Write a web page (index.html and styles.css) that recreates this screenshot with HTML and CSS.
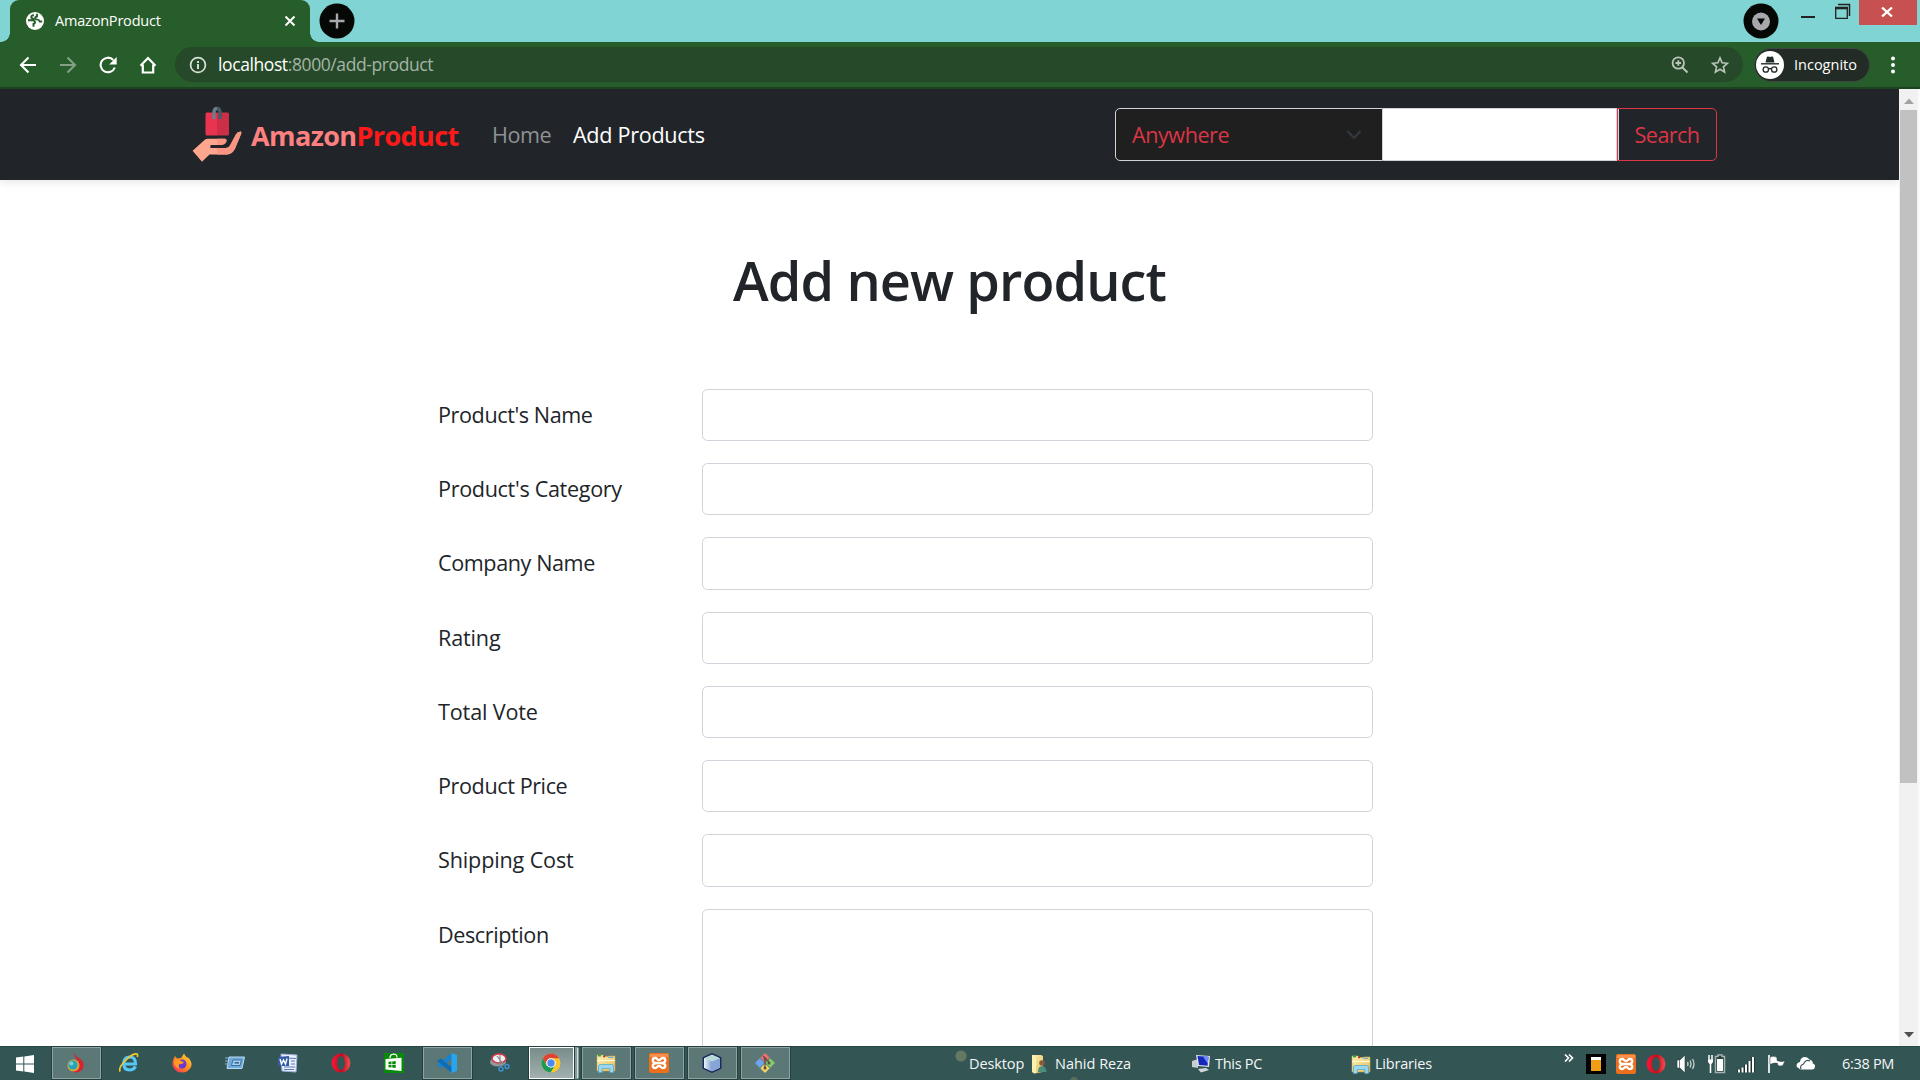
FILE: index.html
```html
<!DOCTYPE html>
<html lang="en">
<head>
<meta charset="utf-8">
<title>AmazonProduct</title>
<link rel="stylesheet" href="styles.css">
</head>
<body>
<svg class="defs" aria-hidden="true">
  <defs>
    <linearGradient id="operaRed" x1="0" x2="1"><stop offset="0" stop-color="#fa1634"/><stop offset=".55" stop-color="#c40a1e"/><stop offset="1" stop-color="#f4504f"/></linearGradient>
    <linearGradient id="folderYellow" x1="0" y1="0" x2="1" y2="1"><stop offset="0" stop-color="#fdf3b4"/><stop offset="1" stop-color="#e3bd5c"/></linearGradient>
    <linearGradient id="foxFire" x1="1" y1="0" x2="0" y2="1"><stop offset="0" stop-color="#ffe23c"/><stop offset=".5" stop-color="#ff8a1c"/><stop offset="1" stop-color="#f5206a"/></linearGradient>
    <linearGradient id="cubeSide" x1="0" x2="1"><stop offset="0" stop-color="#eef5fc"/><stop offset="1" stop-color="#7f9fd0"/></linearGradient>
    <symbol id="opera" viewBox="0 0 20 20"><path fill="url(#operaRed)" fill-rule="evenodd" d="M10 .5c5.2 0 9.3 4.1 9.3 9.5s-4.100 9.500-9.300 9.500S.7 15.400.7 10 4.800.5 10 .5zm0 2.500c-2.300 0-3.900 3-3.900 7s1.600 7 3.900 7 3.900-3 3.900-7-1.600-7-3.900-7z"/></symbol>
    <symbol id="xampp" viewBox="0 0 20 20"><rect width="20" height="20" rx="2" fill="#ec6f1d"/><rect x="1" y="1" width="18" height="3" fill="#f9a063" opacity=".7"/><path d="M8.300 10H11.700M8.300 10C6 10 3.700 9 3.700 7.200S5 5 6.300 5C8.200 5 8 7 10 7s1.800-2 3.700-2c1.300 0 2.600.5 2.600 2.300S14 10 11.700 10c2.300 0 4.600 1 4.600 2.800S15 15 13.700 15c-1.900 0-1.700-2-3.700-2s-1.800 2-3.700 2c-1.300 0-2.600-.5-2.600-2.200S6 10 8.300 10z" fill="none" stroke="#fff" stroke-width="2.300" stroke-linejoin="round"/></symbol>
    <symbol id="library" viewBox="0 0 20 20"><path d="M1 2h6l1 1.500h4L12.500 3H19v15H1z" fill="url(#folderYellow)" stroke="#c9a548" stroke-width=".6"/><path d="M2 2.500h3" stroke="#2aa53a" stroke-width="2"/><path d="M7 3.500h2" stroke="#d23" stroke-width="1.500"/><path d="M12 4.300h5" stroke="#4aa6dd"/><path d="M1 7.500h18" stroke="#fff8d0" stroke-width="1.200"/><path d="M2.500 19.500v-6.300q0-1.700 1.700-1.700h11.600q1.700 0 1.700 1.700v6.300h-3.700v-4H6.200v4z" fill="#9bd6f0" stroke="#4da3cf" stroke-width=".7"/></symbol>
  </defs>
</svg>

<div class="screen">
  <header class="tabstrip">
    <div class="tab">
      <svg class="globe" viewBox="0 0 18 18"><circle cx="9" cy="9" r="9" fill="#fff"/><path d="M8 3.300Q5 3.200 5.300 5.300 5.600 6.800 8.500 7M2 8.300h4.500q2.300.2 2.500 1.900.2 1.500-1.500 1.600v3M11 1.800v2.700q-2 .3-1.800 1.900.3 1.400 2.300 1.200 1.700 0 2.200 1.900h2.500" fill="none" stroke="#275d2a" stroke-width="1.900"/></svg>
      <span class="tab-title">AmazonProduct</span>
      <svg class="tab-close" viewBox="0 0 12 12"><path d="M1.500 1.500l9 9M10.500 1.500l-9 9" stroke="#fff" stroke-width="2"/></svg>
    </div>
    <svg class="new-tab" viewBox="0 0 36 36"><circle cx="18" cy="18" r="17.500" fill="#050805"/><path d="M18 10.500v15M10.500 18h15" stroke="#a8a8ac" stroke-width="2.400"/></svg>
    <div class="window-controls">
      <svg class="tab-search" viewBox="0 0 36 36"><circle cx="18" cy="18" r="17.500" fill="#050805"/><circle cx="18" cy="18.500" r="9" fill="#a8a8ac"/><path d="M14 15.500h8l-4 6.500z" fill="#050805"/></svg>
      <svg class="minimize" viewBox="0 0 14 20"><path d="M0 17h14" stroke="#222" stroke-width="2"/></svg>
      <svg class="restore" viewBox="0 0 16 20"><path d="M3 4.500h11.500V16" fill="none" stroke="#222" stroke-width="1.500"/><path d="M.7 8h11.600v10.300H.7z" fill="none" stroke="#222" stroke-width="1.300"/><path d="M0 8h13" stroke="#222" stroke-width="2.600"/></svg>
      <div class="window-close"><svg viewBox="0 0 12 10"><path d="M1 .5l10 9M11 .5l-10 9" stroke="#fff" stroke-width="2.300"/></svg></div>
    </div>
  </header>

  <div class="toolbar">
    <nav class="nav-buttons">
      <svg viewBox="0 0 18 18"><path d="M17 9H2.500M9.500 1.500L2 9l7.500 7.500" fill="none" stroke="#fff" stroke-width="2.100"/></svg>
      <svg viewBox="0 0 18 18"><path d="M1 9h14.500M8.500 1.500L16 9l-7.500 7.500" fill="none" stroke="#84a185" stroke-width="2.100"/></svg>
      <svg viewBox="0 0 18 18"><path d="M15.800 11.500A7.300 7.300 0 1 1 14.300 4" fill="none" stroke="#fff" stroke-width="2.100"/><path d="M17.700 1v7.500h-7.500z" fill="#fff"/></svg>
      <svg viewBox="0 0 18 18"><path d="M1.500 9.700L9 2l7.500 7.700M3.800 8.500v8h10.400v-8" fill="none" stroke="#fff" stroke-width="2.200"/></svg>
    </nav>
    <div class="omnibox">
      <svg class="info" viewBox="0 0 18 18"><circle cx="9" cy="9" r="7.400" fill="none" stroke="#dbe1db" stroke-width="1.700"/><path d="M9 8v5M9 5v2" stroke="#dbe1db" stroke-width="1.900"/></svg>
      <span class="url"><span class="host">localhost</span>:8000/add-product</span>
      <svg class="zoom" viewBox="0 0 18 18"><circle cx="7.300" cy="7" r="5.700" fill="none" stroke="#bdc6bd" stroke-width="1.800"/><path d="M11.500 11.500l5 5M4.500 7h5.600M7.300 4.200v5.600" stroke="#bdc6bd" stroke-width="1.800"/></svg>
      <svg class="star" viewBox="0 0 18 18"><path d="M9 1.900l2.100 4.900 5.300.5-4 3.500 1.200 5.300L9 13.300l-4.600 2.800 1.200-5.300-4-3.500 5.300-.5z" fill="none" stroke="#bdc6bd" stroke-width="1.600"/></svg>
    </div>
    <div class="incognito">
      <svg viewBox="0 0 28 28"><circle cx="14" cy="14" r="14" fill="#fff"/><path d="M9.500 11.500l1.300-5.300q.3-1 1.300-.7l1.900.5 1.900-.5q1-.3 1.300.7l1.300 5.300z" fill="#222b25"/><path d="M5 12.800h18" stroke="#222b25" stroke-width="1.400"/><g fill="none" stroke="#222b25" stroke-width="1.300"><circle cx="9.800" cy="18.500" r="2.700"/><circle cx="18.200" cy="18.500" r="2.700"/><path d="M12.500 18q1.500-1 3 0"/></g></svg>
      <span>Incognito</span>
    </div>
    <svg class="menu-dots" viewBox="0 0 6 18"><g fill="#fff"><circle cx="3" cy="2.500" r="2"/><circle cx="3" cy="9" r="2"/><circle cx="3" cy="15.500" r="2"/></g></svg>
  </div>

  <div class="viewport">
    <main class="page">
      <nav class="navbar">
        <svg class="logo" viewBox="0 0 50 56"><rect x="13.500" y="6.500" width="12" height="23" rx="1.500" fill="#e8344f"/><path d="M25 6.500h10.500q1.500 0 1.500 1.500v20q0 1.500-1.500 1.500H25z" fill="#cb2f47"/><path d="M22 13V6.500q0-4 3-4" fill="none" stroke="#687f8b" stroke-width="3.400"/><path d="M25 2.500q3 0 3 4V13" fill="none" stroke="#455b66" stroke-width="3.400"/><path d="M.6 44.800L12.500 34q1.500-1.300 3.500-1.300h17.200q1.500.3 1.300 2.300-.3 2.200-2 3l-3 1H19q-1.500 1-.5 3h15q3 0 4.500-2.500l6-11.300q1.500-2.800 5-2.700l.4 1.800-6.200 15q-2.600 5.800-8.200 6.200H17.500L10 55.800z" fill="#ffa68f"/><path d="M25 32.700h8.200q1.500.3 1.300 2.300-.3 2.200-2 3l-3 1H25zM25 42h8.500q3 0 4.500-2.500l6-11.300q1.500-2.800 5-2.700l.4 1.800-6.200 15q-2.600 5.800-8.200 6.200H25z" fill="#f99582"/></svg>
        <a class="brand"><span class="brand-first">Amazon</span><span class="brand-second">Product</span></a>
        <a class="nav-link nav-home">Home</a>
        <a class="nav-link nav-add">Add Products</a>
        <div class="search-group">
          <div class="select"><span>Anywhere</span><svg viewBox="0 0 16 12"><path d="M1.500 2L8 9l6.500-7" fill="none" stroke="#343a40" stroke-width="2"/></svg></div>
          <input class="search-input" type="text" aria-label="Search">
          <button class="search-button">Search</button>
        </div>
      </nav>
      <h1 class="title">Add new product</h1>
      <form class="product-form">
        <label class="tight" for="f1">Product's Name</label><input id="f1" class="field">
        <label class="snug" for="f2">Product's Category</label><input id="f2" class="field">
        <label class="tight" for="f3">Company Name</label><input id="f3" class="field">
        <label for="f4">Rating</label><input id="f4" class="field">
        <label for="f5">Total Vote</label><input id="f5" class="field">
        <label class="tight" for="f6">Product Price</label><input id="f6" class="field">
        <label for="f7">Shipping Cost</label><input id="f7" class="field">
        <label class="tight" for="f8">Description</label><textarea id="f8" class="field field-tall"></textarea>
      </form>
    </main>
    <div class="scrollbar">
      <svg viewBox="0 0 10 6"><path d="M0 6l5-5.500L10 6z" fill="#a3a3a3"/></svg>
      <div class="thumb"></div>
      <svg class="arrow-down" viewBox="0 0 10 6"><path d="M0 0l5 5.500L10 0z" fill="#505050"/></svg>
    </div>
  </div>

  <footer class="taskbar">
    <div class="start"><svg viewBox="0 0 18 18"><path d="M0 2.600L7.300 1.500v7H0zM8.300 1.400L18 0v8.500H8.300zM0 9.500h7.300v7L0 15.500zM8.300 9.500H18V18l-9.700-1.400z" fill="#fff"/></svg></div>
    <div class="apps">
      <div class="app open"><svg viewBox="0 0 20 20"><path d="M8 0q1 3 5 5 5 3 4.500 8t-6.500 6.500q-5 0-6-3l5-4q3-3 .500-6.500Q8 3 8 0z" fill="#d8232d"/><circle cx="7.500" cy="12.500" r="6" fill="#d9a736"/><circle cx="7" cy="12" r="4.500" fill="#23a4b8"/><circle cx="5.500" cy="10.500" r="2" fill="#74d3df"/></svg></div>
      <div class="app"><svg viewBox="0 0 20 20"><path d="M16.500 13.500Q14.500 17 10.500 17 4.800 17 4.800 10.500T10.700 4q6 0 5.800 7H6" fill="none" stroke="#55c7f6" stroke-width="3.200"/><path d="M1.200 18.500Q-1 15 6 8 14-.3 18 1q1 .7.300 3" fill="none" stroke="#f4c82c" stroke-width="1.700"/></svg></div>
      <div class="app"><svg viewBox="0 0 20 20"><path d="M1 7l2-4 2 2.500 4-.5 3-4.500q1.500 3 3.500 4.500V4Q21 9 19 14q-3 5.500-9 5.500T1 14Q0 11 1 7z" fill="url(#foxFire)"/><circle cx="10" cy="11" r="4.500" fill="#6b3bd0"/><path d="M3 6q4-1 6 2l3 1q-2 3-5 2-1 3 1 5-5-1-6-6z" fill="#ff9a1f"/></svg></div>
      <div class="app"><svg viewBox="0 0 20 20"><path d="M4 4h15.500l-2.500 11.500H2z" fill="#6ea9d9" stroke="#b8dcf5"/><path d="M8 7h8.500L15 12.500H6.500z" fill="#a9d2f0" stroke="#396d9c"/><path d="M9.500 9.800h4.500" stroke="#315f8e" stroke-width="1.500"/><path d="M0 5h4M0 8h3M0 11h3" stroke="#8bb5c9"/></svg></div>
      <div class="app"><svg viewBox="0 0 20 20"><path d="M3 1l16 1-1 17-14-1z" fill="#e9effb" stroke="#9ab0df"/><path d="M7 5l11 .5M13 8h4M13 11h4M6 14h11M6 16.500h10" stroke="#5b79b8"/><path d="M0 4l11-1v10L0 13z" fill="#355aa6"/><path d="M2 6l1.500 5L5.500 7l2 4L9 5.500" fill="none" stroke="#fff" stroke-width="1.400"/></svg></div>
      <div class="app"><svg><use href="#opera"/></svg></div>
      <div class="app"><svg viewBox="0 0 20 20"><rect width="20" height="20" fill="#078a08"/><path d="M1.500 6l16-1.200V18l-16-1.500z" fill="#fff"/><path d="M6 5q0-3.500 3.500-3.800Q13 1 13 4.500" fill="none" stroke="#fff" stroke-width="1.200"/><path d="M4.500 8.800l3-.3v2.600h-3zM8.200 8.400l3.500-.3v3H8.200zM4.500 11.800h3v2.700l-3-.3zM8.200 11.800h3.500V15l-3.500-.4z" fill="#078a08"/></svg></div>
      <div class="app open"><svg viewBox="0 0 20 20"><path d="M15 0v5.500L4 14.500 1.500 13.300 0 12z" fill="#1684d2"/><path d="M15 20v-5.500L4 5.500 1.500 6.700 0 8z" fill="#0c6eb8"/><path d="M14.500 0L20 2v16l-5.500 2z" fill="#2ba4ee"/></svg></div>
      <div class="app"><svg viewBox="0 0 20 20"><ellipse cx="8" cy="9" rx="8" ry="4.500" fill="#92979c"/><ellipse cx="9" cy="5.500" rx="7" ry="4.500" fill="#f1f1f3" stroke="#d43a45" stroke-width="1.500"/><path d="M7 3l7 9M10 2v11" stroke="#83878c" stroke-width="1.200"/><circle cx="11" cy="16" r="2" fill="none" stroke="#3c93d2" stroke-width="1.500"/><circle cx="17" cy="13.500" r="2" fill="none" stroke="#3c93d2" stroke-width="1.500"/></svg></div>
      <div class="app open active"><svg viewBox="0 0 20 20"><circle cx="10" cy="10" r="9.500" fill="#fdc52c"/><path d="M1.800 5.200A9.500 9.500 0 0 1 18.200 5.200H10a5 5 0 0 0-4.500 7z" fill="#dc4437"/><path d="M1.800 5.200A9.500 9.500 0 0 0 9.500 19.500L14 12.500l-8.500.2z" fill="#189b58"/><circle cx="10" cy="10" r="4.700" fill="#fff"/><circle cx="10" cy="10" r="3.700" fill="#4a8af4"/></svg></div>
      <div class="app open"><svg><use href="#library"/></svg></div>
      <div class="app open"><svg><use href="#xampp"/></svg></div>
      <div class="app open"><svg viewBox="0 0 20 20"><path d="M10 .8l8.700 4v10.400l-8.700 4-8.700-4V4.800z" fill="#bcd0ee" stroke="#1f2a5c" stroke-width="1.500"/><path d="M2 5.200l8-3.500 8 3.500-8 3.300z" fill="#b8dad7"/><path d="M2 5.200l8 3.300v9.800l-8-3.600z" fill="url(#cubeSide)"/><path d="M18 5.200l-8 3.300v9.800l8-3.600z" fill="#86a4d4"/></svg></div>
      <div class="app open"><svg viewBox="0 0 20 20"><path d="M10 0l4.700 4.700L10 9.400 5.300 4.700z" fill="#ef7077"/><path d="M4.700 5.300L9.400 10l-4.700 4.700L0 10z" fill="#6ea4ef"/><path d="M15.300 5.300L20 10l-4.700 4.700L10.600 10z" fill="#83cc68"/><path d="M10 10.600l4.700 4.700L10 20l-4.700-4.700z" fill="#f2d667"/><path d="M8 3l6 6M10 5v10" stroke="#5a5148" stroke-width="1.300"/><g fill="#5a5148"><circle cx="10" cy="6" r="1.400"/><circle cx="14" cy="10" r="1.500"/><circle cx="10" cy="15" r="1.500"/></g></svg></div>
    </div>
    <div class="shortcuts">
      <span class="t-desktop">Desktop</span>
      <svg class="user-folder" viewBox="0 0 20 20"><path d="M2 1h9l2 1v16l-9 1.500L2 18z" fill="url(#folderYellow)"/><path d="M2 1l4 2v16.500L2 18z" fill="#fff0b0"/><circle cx="12" cy="9" r="2.800" fill="#8b5a3c"/><path d="M8 18q0-6 4-6t4.500 6z" fill="#4d8c79"/></svg>
      <span class="t-user">Nahid Reza</span>
      <svg class="pc" viewBox="0 0 20 20"><path d="M1 7l6-2v9l-6-1z" fill="#c8cdd1"/><path d="M5 1l14 1-1 11-11-1z" fill="#e4e7ea"/><path d="M6.500 2l11 .8-.9 9L8 11z" fill="#1527bb"/><path d="M12 2.400l5.500.4-.7 7z" fill="#6c8dfb"/><path d="M7 15l8-1 3 2-8 2.500z" fill="#d4d7da"/></svg>
      <span class="t-pc">This PC</span>
      <svg class="lib"><use href="#library"/></svg>
      <span class="t-lib">Libraries</span>
    </div>
    <div class="tray">
      <svg class="more" viewBox="0 0 10 8"><path d="M1 .5L4.500 4 1 7.500M5 .5L8.500 4 5 7.500" fill="none" stroke="#fff" stroke-width="1.600"/></svg>
      <svg viewBox="0 0 20 20"><path d="M0 0h20v20H0z"/><path d="M5 3h10v14H5z" fill="#f19d16"/><path d="M5 3h10v3H5z" fill="#fff"/></svg>
      <svg><use href="#xampp"/></svg>
      <svg><use href="#opera"/></svg>
      <svg viewBox="0 0 20 20"><path d="M1 6h3l5-5v18l-5-5H1z" fill="#fff" stroke="#263d3b" stroke-width=".6"/><path d="M3.500 6v8" stroke="#718180"/><path d="M11.500 8q1 2 0 4M14 6.500q2 3.500 0 7M16.500 5q3 5 0 10" fill="none" stroke="#d5dedd" stroke-width="1.200"/></svg>
      <svg viewBox="0 0 20 20"><path d="M4.500 10v9M3 1v5M6 1v5" stroke="#fff" stroke-width="1.500"/><path d="M2 5.500h5V8L5.500 10h-2L2 8z" fill="#fff"/><path d="M9.500 2.500H12V1h4v1.500h2.500V18.500h-9z" fill="#233b3a" stroke="#a7b3b2" stroke-width="1.500"/><path d="M11 5h6v12h-6z" fill="#fff"/></svg>
      <svg viewBox="0 0 20 20"><path d="M3 15.500v3M6.500 13.500v5M10 10.500v8M13.500 7v11.500M17 3v15.500" stroke="#1d3230" stroke-width="3.500"/><path d="M3 15.500v3M6.500 13.500v5M10 10.500v8M13.500 7v11.500M17 3v15.500" stroke="#fff" stroke-width="2"/></svg>
      <svg viewBox="0 0 20 20"><path d="M3 1v18" stroke="#fff" stroke-width="1.700"/><path d="M4 3q4-1.500 7 .5v3q4 2 8 .2l-2 4.500q-3 2-5.500-.5v-1.500Q8 8.500 4 10.500z" fill="#fff" stroke="#263d3b" stroke-width=".5"/></svg>
      <svg viewBox="0 0 20 20"><path d="M2.500 14Q0 13 .7 10.500T4 8q.5-5 5-5 3 0 4.500 2.500 3.500 1 3.300 4 2.700.8 2.200 3.500-.5 2.500-3 2.500H6q-2.500 0-3.500-1.500z" fill="#fff"/><path d="M5 15q-1.500-3.500 2.500-5Q10 5 14 7" fill="none" stroke="#365553" stroke-width="1.200"/></svg>
      <span class="clock">6:38 PM</span>
    </div>
  </footer>
</div>
</body>
</html>
```

FILE: styles.css
```css
* { box-sizing: border-box; }
body { margin: 0; font-family: "Open Sans", "Noto Sans", sans-serif; overflow: hidden; }
svg { display: block; flex: none; }
span, a, h1 { white-space: nowrap; }
.defs { position: absolute; width: 0; height: 0; }
.screen { width: 1920px; height: 1080px; display: grid; grid-template-rows: 42px 47px 957px 34px; overflow: hidden; }

/* Browser tab strip */
.tabstrip { display: flex; background: #80d4d3; padding-left: 10px; }
.tab { width: 300px; height: 42px; background: #275d2a; border-radius: 9px 9px 0 0; display: flex; align-items: center; padding: 0 14px 0 16px; position: relative; }
.tab::before, .tab::after { content: ""; position: absolute; bottom: 0; width: 9px; height: 9px; }
.tab::before { left: -9px; background: radial-gradient(circle at 0 0, transparent 8.500px, #275d2a 9px); }
.tab::after { right: -9px; background: radial-gradient(circle at 100% 0, transparent 8.500px, #275d2a 9px); }
.globe { width: 18px; height: 18px; }
.tab-title { margin-left: 11px; font-size: 14.500px; color: #fff; letter-spacing: -.2px; margin-top: -1px; }
.tab-close { width: 12px; height: 12px; margin-left: auto; }
.new-tab { width: 36px; height: 36px; margin: 3px 0 0 9px; }
.window-controls { margin-left: auto; display: flex; padding-right: 3px; }
.tab-search { width: 36px; height: 36px; margin: 3px 22px 0 0; }
.minimize { width: 14px; height: 20px; margin-right: 20px; }
.restore { width: 16px; height: 20px; margin-right: 8px; }
.window-close { width: 58px; height: 25px; background: #c75050; display: grid; place-items: center; }
.window-close svg { width: 12px; height: 10px; margin-right: 2px; margin-bottom: 2px; }

/* Address toolbar */
.toolbar { display: flex; align-items: center; background: #275d2a; border-bottom: 2px solid #1c431f; }
.nav-buttons { display: flex; gap: 22px; padding-left: 19px; width: 175px; }
.nav-buttons svg { width: 18px; height: 18px; }
.omnibox { width: 1568px; height: 35px; border-radius: 18px; background: #264a29; display: flex; align-items: center; padding: 0 14px; }
.info { width: 18px; height: 18px; margin-right: 11px; }
.url { font-size: 17.500px; color: #a5b4a6; letter-spacing: -.4px; margin-top: -1px; }
.host { color: #fff; }
.zoom { width: 18px; height: 18px; margin-left: auto; margin-right: 22px; }
.star { width: 18px; height: 18px; }
.incognito { width: 116px; height: 34px; margin-left: 11px; border: 1px solid #3c4840; border-radius: 17px; background: #222b25; display: flex; align-items: center; color: #fff; font-size: 14.500px; padding-left: 1px; }
.incognito svg { width: 28px; height: 28px; margin-right: 10px; }
.menu-dots { width: 6px; height: 18px; margin-left: 20px; }

/* Page */
.viewport { display: grid; grid-template-columns: 1899px 21px; min-height: 0; }
.page { overflow: hidden; background: #fff; color: #212529; }
.navbar { height: 91px; background: #212529; display: flex; align-items: center; padding: 0 182px 0 192px; box-shadow: 0 3px 8px rgba(0,0,0,.09); }
.logo { width: 50px; height: 56px; margin-top: -1px; }
.brand { width: 232px; margin: 1px 0 0 9px; font-size: 27px; font-weight: 700; letter-spacing: -.600px; }
.brand-first { color: #ff8080; }
.brand-second { color: #ff1a1a; }
.nav-link { font-size: 21.600px; letter-spacing: -.3px; }
.nav-home { width: 81px; margin-left: 9px; color: #909294; letter-spacing: -.5px; }
.nav-add { color: #fff; }
.search-group { margin-left: auto; display: flex; width: 602px; height: 53px; }
.select { width: 268px; border: 1px solid #ced4da; border-radius: 5px 0 0 5px; background: #1f1f1f; color: #dc3545; display: flex; align-items: center; justify-content: space-between; padding: 0 20px 0 16px; font-size: 21.600px; letter-spacing: -.450px; }
.select svg { width: 16px; height: 12px; }
.search-input { width: 234px; border: 1px solid #ced4da; border-left: 0; background: #fff; padding: 0; }
.search-button { width: 100px; border: 1px solid #dc3545; border-radius: 0 5px 5px 0; background: transparent; box-shadow: inset 1px 0 0 #ced4da; color: #dc3545; font: 21.600px "Open Sans", sans-serif; letter-spacing: -.600px; padding: 0; }
.title { margin: 67px 0 0; text-align: center; font-size: 54px; font-weight: 600; line-height: 66px; letter-spacing: -.900px; }
.product-form { margin: 75.800px 0 0 438px; width: 936px; display: grid; grid-template-columns: 264px 671px; row-gap: 22px; }
.product-form label { height: 52.250px; font-size: 21.600px; line-height: 52.500px; letter-spacing: -.15px; white-space: nowrap; }
.product-form .snug { letter-spacing: -.330px; }
.product-form .tight { letter-spacing: -.410px; }
.field { display: block; width: 671px; height: 52.250px; border: 1px solid #ced4da; border-radius: 5.500px; background: #fff; padding: 0 16px; resize: none; margin: 0; }
.field-tall { height: 180px; }
.scrollbar { background: #f1f1f1; border-right: 2px solid #fafafa; display: flex; flex-direction: column; align-items: center; padding: 9px 0 8px; }
.scrollbar svg { width: 10px; height: 6px; }
.thumb { width: 17px; height: 673px; margin-top: 6px; background: #c1c1c1; }
.scrollbar .arrow-down { margin-top: auto; }

/* Taskbar */
.taskbar {
  background:
    radial-gradient(circle at 961px 9px, rgba(150,155,110,.5) 0 5px, transparent 6px),
    radial-gradient(ellipse at 971px -1px, rgba(165,170,125,.5) 0 7px, transparent 9px),
    radial-gradient(circle at 1074px 34px, rgba(150,150,100,.4) 0 3px, transparent 5px),
    #335554;
  border-top: 1px solid #294746; display: flex; color: #f4f7f7; font-size: 14.500px;
}
.start { width: 50px; display: flex; align-items: center; padding-left: 16px; }
.start svg { width: 18px; height: 18px; }
.apps { display: grid; grid-template-columns: repeat(14, 53px); height: 33px; }
.app { display: grid; place-items: center; width: 49px; height: 32px; margin-left: 2px; }
.app svg { width: 20px; height: 20px; margin-right: 1px; }
.open { background: #5b7776; border: 1px solid #8fa3a2; outline: 1px solid #233f3e; outline-offset: 0; }
.active { background: linear-gradient(#788d8b, #a2b0af); border-color: #fff; width: 45px; box-shadow: 4px 0 0 -1px #879998, 5px 0 0 -0.500px #d6dddd; }
.shortcuts { display: flex; align-items: center; margin-left: 177px; width: 540px; }
.shortcuts svg { width: 20px; height: 20px; }
.t-desktop { width: 61px; letter-spacing: -.1px; }
.user-folder { margin-right: 5px; }
.t-user { width: 136px; }
.pc { margin-right: 4px; }
.t-pc { width: 136px; letter-spacing: -.3px; }
.lib { margin-right: 4px; }
.t-lib { letter-spacing: -.2px; }
.tray { display: flex; align-items: center; gap: 10px; padding-left: 55px; }
.tray svg { width: 20px; height: 20px; }
.tray .more { width: 10px; height: 8px; margin: -12px 2px 0 0; }
.clock { margin-left: 16px; letter-spacing: -.3px; }
```
